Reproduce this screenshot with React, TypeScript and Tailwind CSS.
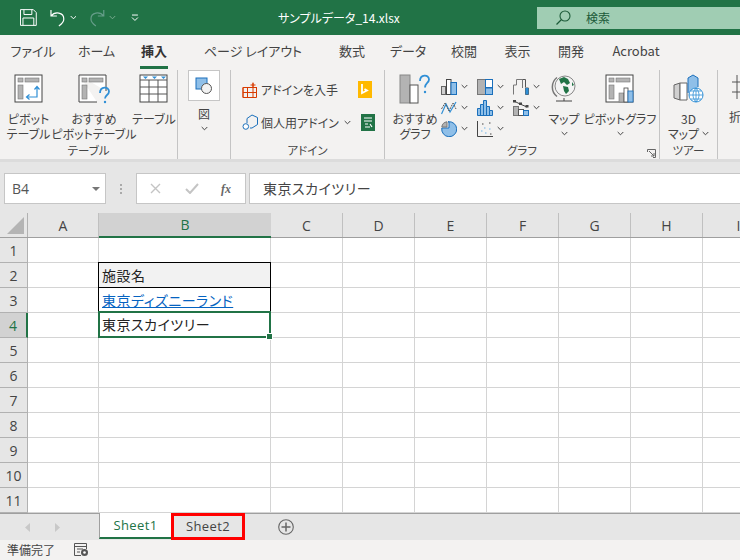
import { Fragment } from "react";

const jp = `font-['Noto_Sans_CJK_JP','Noto_Sans',sans-serif] [font-feature-settings:"palt"]`;

function Chev({ className = "" }: { className?: string }) {
  return (
    <svg width="7" height="5" viewBox="0 0 7 5" className={className}>
      <path d="M.7 1l2.8 2.8L6.3 1" fill="none" stroke="#444" strokeWidth="1" />
    </svg>
  );
}

function Frame({ children, w = 30, h = 30 }: { children: React.ReactNode; w?: number; h?: number }) {
  return (
    <svg width={w} height={h} viewBox={`0 0 ${w} ${h}`} className="block shrink-0">
      {children}
    </svg>
  );
}

const PivotBase = () => (
  <>
    <rect x="1" y="1" width="27" height="27" fill="#fff" stroke="#444" />
    <rect x="4" y="4" width="5" height="4" fill="#b3b3b3" stroke="#777" strokeWidth=".6" />
    <rect x="11" y="4" width="14" height="4" fill="#b3b3b3" stroke="#777" strokeWidth=".6" />
    <rect x="4" y="11" width="5" height="14" fill="#b3b3b3" stroke="#777" strokeWidth=".6" />
  </>
);

function PivotIcon() {
  return (
    <Frame>
      <PivotBase />
      <path d="M13 23h10v-10M20.5 15.5l2.5-3 2.5 3M15.5 20.5l-3 2.5 3 2.5" fill="none" stroke="#2f8fd6" strokeWidth="1.2" />
    </Frame>
  );
}

function PivotHelpIcon() {
  return (
    <Frame w={32}>
      <path d="M1 1h27v16M19 28H1V1" fill="#fff" stroke="#444" />
      <rect x="4" y="4" width="5" height="4" fill="#b3b3b3" stroke="#777" strokeWidth=".6" />
      <rect x="11" y="4" width="14" height="4" fill="#b3b3b3" stroke="#777" strokeWidth=".6" />
      <rect x="4" y="11" width="5" height="14" fill="#b3b3b3" stroke="#777" strokeWidth=".6" />
      <path d="M22 19c0-7 9-7 9-1.500 0 3.500-4 3.500-4 7" fill="none" stroke="#2f8fd6" strokeWidth="1.800" />
      <circle cx="27" cy="28" r="1.200" fill="#2f8fd6" />
    </Frame>
  );
}

function TableIcon() {
  return (
    <Frame>
      <rect x="1" y="1" width="27" height="27" fill="#fff" stroke="#444" />
      <path d="M1 6h27M1 13h27M1 20h27M10 6v22M19 6v22" stroke="#555" fill="none" />
      <path d="M4 2.500h5L6.500 5zM13 2.500h5L15.500 5zM22 2.500h5L24.500 5z" fill="#2f8fd6" />
    </Frame>
  );
}

function ShapesIcon() {
  return (
    <svg width="18" height="18" viewBox="0 0 18 18">
      <rect x="1" y="1" width="11" height="11" fill="#8fbfe8" stroke="#1a6fbb" />
      <circle cx="11.500" cy="11.500" r="5" fill="#f2f2f2" stroke="#555" />
    </svg>
  );
}

function StoreIcon() {
  return (
    <svg width="16" height="16" viewBox="0 0 16 16">
      <path d="M1 5.500h14M1 10.500h14M1 5.500v10h10v-15M5.500 5.500v10" fill="none" stroke="#d83b01" />
      <path d="M1 5.500v10h5M11 5.500h3.500v10H11M11 1v4.500M8.500 3h5" fill="none" stroke="#d83b01" />
    </svg>
  );
}

function AddinIcon() {
  return (
    <svg width="17" height="17" viewBox="0 0 17 17">
      <path d="M5 9V4.500L10 1l5.500 2.500v7L10 14H8" fill="none" stroke="#1a6fbb" />
      <circle cx="3.800" cy="12.500" r="2.800" fill="#fff" stroke="#1a6fbb" />
    </svg>
  );
}

function BingIcon() {
  return (
    <svg width="14" height="17" viewBox="0 0 14 17">
      <rect width="14" height="17" fill="#ffb900" />
      <path d="M4 3v9l5-2.500L6.500 8" fill="none" stroke="#fff" strokeWidth="1.800" />
    </svg>
  );
}

function PeopleIcon() {
  return (
    <svg width="14" height="17" viewBox="0 0 14 17">
      <rect width="14" height="17" fill="#217346" />
      <path d="M3 4h8M3 7h8M4 10h3M9 10l2 3M4 13h5" stroke="#fff" strokeWidth="1.200" fill="none" />
    </svg>
  );
}

function RecommendChartIcon() {
  return (
    <Frame w={32}>
      <rect x="1" y="1" width="10" height="28" fill="#b3b3b3" stroke="#888" />
      <rect x="11" y="11" width="8" height="18" fill="#fff" stroke="#555" />
      <path d="M21 7c0-7 9-7 9-1.500 0 3.500-4 3.500-4 8" fill="none" stroke="#2f8fd6" strokeWidth="1.800" />
      <circle cx="26" cy="18" r="1.200" fill="#2f8fd6" />
    </Frame>
  );
}

function MiniColumn() {
  return (
    <Frame w={16} h={16}>
      <rect x=".5" y="7.500" width="4" height="8" fill="#d0d0d0" stroke="#666" />
      <rect x="5.500" y=".5" width="4.500" height="15" fill="#fff" stroke="#444" />
      <rect x="10" y="3.500" width="5.500" height="12" fill="#8fbfe8" stroke="#1a6fbb" />
    </Frame>
  );
}

function MiniLine() {
  return (
    <Frame w={16} h={16}>
      <path d="M.5 14L5 4l4 8 6-10" fill="none" stroke="#2f8fd6" strokeWidth="1.200" />
      <path d="M.5 9L4 3l4 8 4-8 3 6" fill="none" stroke="#555" strokeWidth="1" strokeDasharray="2 1" />
    </Frame>
  );
}

function MiniPie() {
  return (
    <Frame w={16} h={16}>
      <path d="M7 .8A7.500 7.500 0 1 1 .8 7H8V.8z" fill="#8fbfe8" stroke="#1a6fbb" />
      <path d="M6 .8V6H.8A6 6 0 0 1 6 .8z" fill="#b3b3b3" stroke="#777" />
    </Frame>
  );
}

function MiniTree() {
  return (
    <Frame w={16} h={16}>
      <rect x=".5" y=".5" width="8" height="15" fill="#b3b3b3" stroke="#777" />
      <rect x="8.500" y=".5" width="7" height="8" fill="#fff" stroke="#1a6fbb" />
      <rect x="8.500" y="9" width="7" height="6.500" fill="#8fbfe8" stroke="#1a6fbb" />
    </Frame>
  );
}

function MiniHisto() {
  return (
    <Frame w={16} h={16}>
      <path d="M.5 15.500v-7h3v-4h3v-4h3v6h3v4h3v5z" fill="#8fbfe8" stroke="#1a6fbb" />
      <path d="M3.500 8.500v7M6.500 4.500v11M9.500 6.500v9M12.500 10.500v5" stroke="#1a6fbb" />
    </Frame>
  );
}

function MiniScatter() {
  return (
    <Frame w={16} h={16}>
      <path d="M.5 0v15.500H16" fill="none" stroke="#444" />
      <path d="M4 10h1.500M7 7h1.500M8 12h1.500M12 8h1.500" stroke="#6fb3e8" />
      <path d="M5 3h1.500M12 2h1.500M13 13h1.500" stroke="#444" />
    </Frame>
  );
}

function MiniWaterfall() {
  return (
    <Frame w={16} h={16}>
      <path d="M.5 15.500V6h3V.5h6V9" fill="none" stroke="#777" />
      <path d="M9.500 .5h3v8M12.500 9v6.500h3V9z" fill="none" stroke="#555" />
      <rect x="12.500" y="9" width="3" height="6.500" fill="#2f8fd6" />
    </Frame>
  );
}

function MiniStock() {
  return (
    <Frame w={16} h={16}>
      <rect x=".5" y="6.500" width="5" height="9" fill="#b3b3b3" stroke="#777" />
      <rect x="5.500" y="9.500" width="5" height="6" fill="#fff" stroke="#555" />
      <rect x="10.500" y="10.500" width="5" height="5" fill="#8fbfe8" stroke="#1a6fbb" />
      <path d="M1 1l6 3 7 3" stroke="#444" strokeWidth="1" fill="none" />
      <rect x="0" y="0" width="3" height="2.500" fill="#444" />
      <rect x="6" y="2.500" width="3" height="2.500" fill="#444" />
      <rect x="12.500" y="5" width="3" height="2.500" fill="#444" />
    </Frame>
  );
}

function GlobeIcon() {
  return (
    <Frame w={26} h={30}>
      <path d="M5 27h16M13 24v3" stroke="#444" fill="none" />
      <path d="M6 3.500a12 12 0 0 0 0 19" stroke="#777" strokeWidth="1.500" fill="none" />
      <circle cx="14" cy="12" r="10" fill="#f4f4f4" stroke="#888" />
      <path d="M8 5l5-2 4 2 2 4-3 2-3-3-3 2zM12 12l5 1 1 4-3 3-2-3zM21 8l2 3-2 1z" fill="#217346" />
    </Frame>
  );
}

function PivotChartIcon() {
  return (
    <Frame>
      <PivotBase />
      <rect x="14" y="19" width="5" height="9" fill="#b3b3b3" stroke="#777" strokeWidth=".6" />
      <rect x="19" y="14" width="4" height="14" fill="#fff" stroke="#444" strokeWidth=".8" />
      <rect x="23" y="17" width="5" height="11" fill="#8fbfe8" stroke="#1a6fbb" strokeWidth=".8" />
    </Frame>
  );
}

function Map3DIcon() {
  return (
    <Frame w={32}>
      <path d="M1 11l6-2v17l-6-2z" fill="#d0d0d0" stroke="#666" />
      <path d="M7 9h7v17H7z" fill="#fff" stroke="#666" />
      <path d="M15 19V4l5-3 5 3v9" fill="#8fbfe8" stroke="#1a6fbb" />
      <circle cx="23" cy="21" r="7" fill="#fff" stroke="#2f8fd6" />
      <path d="M16 21h14M23 14v14M18 17h10M18 25h10M23 14c-4 4-4 10 0 14M23 14c4 4 4 10 0 14" stroke="#2f8fd6" strokeWidth=".8" fill="none" />
    </Frame>
  );
}

function BigButton({ icon, lines, width, chevron }: { icon: React.ReactNode; lines: string[]; width: number; chevron?: boolean }) {
  return (
    <div className="flex flex-col items-center shrink-0" style={{ width }}>
      <div className="h-[32px] flex items-start justify-center">{icon}</div>
      <div className="mt-[5px] flex flex-col items-center text-[12px] leading-[15px] text-[#444] whitespace-nowrap">
        {lines.map((l) => (
          <span key={l}>{l}</span>
        ))}
        {chevron && <Chev className="mt-[5px]" />}
      </div>
    </div>
  );
}

function Group({ label, width, children, launcher }: { label: string; width: number; children: React.ReactNode; launcher?: boolean }) {
  return (
    <div className="relative flex flex-col shrink-0 h-[89px] border-r border-[#c4c4c4]" style={{ width }}>
      <div className="flex-1 flex min-h-0">{children}</div>
      <div className="h-[16px] text-center text-[11.500px] leading-[14px] text-[#444] whitespace-nowrap">{label}</div>
      {launcher && (
        <svg width="9" height="9" viewBox="0 0 9 9" className="absolute right-[3px] bottom-[1px]">
          <path d="M.5 3V.5H8.500V8.500H6M2 2l5 5M4 7h3V4" fill="none" stroke="#666" />
        </svg>
      )}
    </div>
  );
}

function MiniBtn({ icon }: { icon: React.ReactNode }) {
  return (
    <div className="flex items-center gap-[4px] h-[21px]">
      {icon}
      <Chev />
    </div>
  );
}

const tabs: [string, number, boolean?][] = [
  ["ファイル", 66],
  ["ホーム", 61],
  ["挿入", 54, true],
  ["ページ レイアウト", 144],
  ["数式", 54],
  ["データ", 58],
  ["校閲", 54],
  ["表示", 53],
  ["開発", 54],
  ["Acrobat", 76],
];

const cols = ["A", "B", "C", "D", "E", "F", "G", "H", "I"];
const colW: Record<string, number> = { A: 71, B: 172, C: 72, D: 72, E: 72, F: 72, G: 72, H: 72, I: 72 };
const rows = [1, 2, 3, 4, 5, 6, 7, 8, 9, 10, 11];

export default function App() {
  return (
    <div className={`w-[740px] h-[560px] overflow-hidden flex flex-col bg-[#f3f2f1] ${jp}`}>
      {/* title bar */}
      <div className="h-[35px] bg-[#217346] flex items-center shrink-0 relative text-white">
        <svg width="17" height="17" viewBox="0 0 17 17" className="ml-[20px]">
          <path d="M.5.5h13l3 3v13H.5zM4 .5v5h8v-5M3 16.500V9h11v7.500" fill="none" stroke="#fff" />
        </svg>
        <svg width="18" height="18" viewBox="0 0 18 18" className="ml-[12px]">
          <path d="M2 1v6h6M2 7c4-5 13-4 13 3 0 3-2 5-5 7" fill="none" stroke="#fff" strokeWidth="1.200" />
        </svg>
        <svg width="7" height="5" viewBox="0 0 7 5" className="ml-[3px]">
          <path d="M.7 1l2.800 2.800L6.300 1" fill="none" stroke="#fff" />
        </svg>
        <svg width="18" height="18" viewBox="0 0 18 18" className="ml-[12px] opacity-40">
          <path d="M16 1v6h-6M16 7C12 2 3 3 3 10c0 3 2 5 5 7" fill="none" stroke="#cde" strokeWidth="1.200" />
        </svg>
        <svg width="7" height="5" viewBox="0 0 7 5" className="ml-[3px] opacity-40">
          <path d="M.7 1l2.800 2.800L6.300 1" fill="none" stroke="#fff" />
        </svg>
        <svg width="8" height="8" viewBox="0 0 8 8" className="ml-[15px]">
          <path d="M1 1h6M1 3.500l3 3 3-3" fill="none" stroke="#fff" />
        </svg>
        <div className="ml-[139px] text-[12px] whitespace-nowrap flex items-center w-[115px]">
          サンプルデータ_14.xlsx
          <svg width="7" height="4" viewBox="0 0 7 4" className="ml-[6px]">
            <path d="M0 0h7L3.500 4z" fill="#fff" />
          </svg>
        </div>
        <div className="ml-[144px] w-[206px] h-[22px] bg-[#a0cdb3] flex items-center text-[#1c5a38]">
          <svg width="15" height="15" viewBox="0 0 15 15" className="ml-[19px]">
            <circle cx="9" cy="6" r="5" fill="none" stroke="#1c5a38" strokeWidth="1.100" />
            <path d="M5.500 9.500L.5 14.500" stroke="#1c5a38" strokeWidth="1.300" />
          </svg>
          <span className="ml-[15px] text-[12px]">検索</span>
        </div>
      </div>

      {/* tabs */}
      <div className="h-[34px] shrink-0 flex pl-[-1px] text-[13px] text-[#444]">
        {tabs.map(([t, w, active]) => (
          <div key={t} className="flex justify-center shrink-0 pt-[6px]" style={{ width: w }}>
            <span className={active ? "h-[28px] border-b-[3px] border-[#217346] font-bold px-[1px] text-[#333]" : ""}>{t}</span>
          </div>
        ))}
      </div>

      {/* ribbon */}
      <div className="h-[93px] shrink-0 flex overflow-hidden border-b-[3px] border-[#dcdcdc] pt-px">
        <Group label="テーブル" width={178}>
          <div className="flex pt-[4px]">
            <BigButton width={57} icon={<PivotIcon />} lines={["ピボット", "テーブル"]} />
            <BigButton width={74} icon={<PivotHelpIcon />} lines={["おすすめ", "ピボットテーブル"]} />
            <BigButton width={46} icon={<TableIcon />} lines={["テーブル"]} />
          </div>
        </Group>
        <Group label="" width={53}>
          <div className="w-full flex flex-col items-center">
            <div className="w-[32px] h-[31px] bg-white border border-[#c6c6c6] flex items-center justify-center">
              <ShapesIcon />
            </div>
            <span className="mt-[5px] text-[12px] leading-[15px] text-[#444]">図</span>
            <Chev className="mt-[5px]" />
          </div>
        </Group>
        <Group label="アドイン" width={154}>
          <div className="pl-[11px] pt-[11px] flex flex-col gap-[16px] w-full">
            <div className="flex items-center h-[17px] text-[12px] text-[#444] whitespace-nowrap">
              <StoreIcon />
              <span className="ml-[3px] w-[97px]">アドインを入手</span>
              <BingIcon />
            </div>
            <div className="flex items-center h-[17px] text-[12px] text-[#444] whitespace-nowrap">
              <AddinIcon />
              <span className="ml-[2px] w-[83px]">個人用アドイン</span>
              <Chev className="mr-[10px]" />
              <PeopleIcon />
            </div>
          </div>
        </Group>
        <Group label="グラフ" width={275} launcher>
          <div className="flex pt-[4px] pl-[9px]">
            <BigButton width={42} icon={<RecommendChartIcon />} lines={["おすすめ", "グラフ"]} />
            <div className="ml-[5px] grid grid-cols-[36px_36px_36px] content-start pt-[2px] h-[70px]">
              <MiniBtn icon={<MiniColumn />} />
              <MiniBtn icon={<MiniTree />} />
              <MiniBtn icon={<MiniWaterfall />} />
              <MiniBtn icon={<MiniLine />} />
              <MiniBtn icon={<MiniHisto />} />
              <MiniBtn icon={<MiniStock />} />
              <MiniBtn icon={<MiniPie />} />
              <MiniBtn icon={<MiniScatter />} />
            </div>
            <BigButton width={30} icon={<GlobeIcon />} lines={["マップ"]} chevron />
            <div className="ml-[6px]">
              <BigButton width={70} icon={<PivotChartIcon />} lines={["ピボットグラフ"]} chevron />
            </div>
          </div>
        </Group>
        <Group label="ツアー" width={58}>
          <div className="w-full pt-[4px]">
            <div className="flex flex-col items-center">
              <div className="h-[32px]">
                <Map3DIcon />
              </div>
              <div className="mt-[5px] text-[12px] leading-[15px] text-[#444] text-center whitespace-nowrap">
                <div>3D</div>
                <div className="flex items-center gap-[3px]">
                  マップ
                  <Chev />
                </div>
              </div>
            </div>
          </div>
        </Group>
        <div className="pl-[11px] pt-[4px] text-[12px] leading-[15px] text-[#444] shrink-0">
          <svg width="12" height="28" viewBox="0 0 12 28" className="ml-[3px] mb-[7px]">
            <path d="M0 8h12M5 1v24M0 18h12" stroke="#555" fill="none" />
          </svg>
          折
        </div>
      </div>

      {/* formula bar */}
      <div className="h-[51px] shrink-0 bg-[#e6e6e6] flex pt-[11px] pl-[4px]">
        <div className="h-[31px] w-[102px] bg-white border border-[#c6c6c6] flex items-center justify-between pl-[7px] pr-[5px] text-[14px] text-[#555] font-['Open_Sans',sans-serif]">
          B4
          <svg width="8" height="4" viewBox="0 0 8 4">
            <path d="M0 0h8L4 4z" fill="#777" />
          </svg>
        </div>
        <div className="w-[30px] h-[31px] flex flex-col items-center justify-center gap-[2px]">
          <span className="w-[2px] h-[2px] bg-[#aaa]" />
          <span className="w-[2px] h-[2px] bg-[#aaa]" />
          <span className="w-[2px] h-[2px] bg-[#aaa]" />
        </div>
        <div className="h-[31px] w-[110px] bg-white border border-[#c6c6c6] flex items-center text-[#bbb]">
          <svg width="11" height="11" viewBox="0 0 11 11" className="ml-[13px]">
            <path d="M1 1l9 9M10 1l-9 9" stroke="#c4c4c4" strokeWidth="1.400" />
          </svg>
          <svg width="14" height="11" viewBox="0 0 14 11" className="ml-[24px]">
            <path d="M1 6l4 4 8-9" fill="none" stroke="#c4c4c4" strokeWidth="2" />
          </svg>
          <span className="ml-[22px] text-[12px] italic font-bold text-[#666] font-['Liberation_Serif',serif]">fx</span>
        </div>
        <div className="ml-[3px] h-[31px] flex-1 bg-white border border-r-0 border-[#c6c6c6] flex items-center pl-[13px] text-[14px] text-[#444] tracking-[0.5px]">
          東京スカイツリー
        </div>
      </div>

      {/* sheet */}
      <div className="h-[300px] shrink-0 bg-white overflow-hidden">
        <div className="flex h-[25px] bg-[#e6e6e6] border-b border-[#9f9f9f] w-[800px] text-[14px] text-[#444] font-['Open_Sans',sans-serif]">
          <div className="w-[28px] shrink-0 border-r border-[#b1b1b1] flex items-end justify-end pr-[3px] pb-[3px]">
            <svg width="17" height="17" viewBox="0 0 17 17">
              <path d="M17 0v17H0z" fill="#b4b4b4" />
            </svg>
          </div>
          {cols.map((c) => (
            <div
              key={c}
              className={
                c === "B"
                  ? "shrink-0 flex items-center justify-center bg-[#d2d2d2] border-b-2 border-[#217346] text-[#217346] h-[25px]"
                  : "shrink-0 flex items-center justify-center border-r border-[#c0c0c0]"
              }
              style={{ width: colW[c] }}
            >
              {c}
            </div>
          ))}
        </div>
        {rows.map((r) => (
          <div key={r} className="flex h-[25px] w-[800px]">
            <div
              className={
                r === 4
                  ? "w-[28px] shrink-0 flex items-center justify-center bg-[#d2d2d2] border-r-2 border-[#217346] border-b border-b-[#b1b1b1] text-[#217346] text-[14px] font-['Open_Sans',sans-serif]"
                  : "w-[28px] shrink-0 flex items-center justify-center bg-[#e6e6e6] border-r border-b border-[#b1b1b1] text-[#444] text-[14px] font-['Open_Sans',sans-serif]"
              }
            >
              {r}
            </div>
            {cols.map((c) => (
              <Fragment key={c}>
                <Cell col={c} row={r} />
              </Fragment>
            ))}
          </div>
        ))}
      </div>

      {/* sheet tabs */}
      <div className="h-[27px] shrink-0 bg-[#e6e6e6] border-t border-[#9f9f9f] flex">
        <div className="w-[99px] shrink-0 flex items-center pl-[25px] gap-[23px]">
          <svg width="6" height="9" viewBox="0 0 6 9">
            <path d="M5 0v9L0 4.500z" fill="#c8c8c8" />
          </svg>
          <svg width="6" height="9" viewBox="0 0 6 9">
            <path d="M1 0v9l5-4.500z" fill="#c8c8c8" />
          </svg>
        </div>
        <div className="w-[72px] h-[26px] bg-white border-l border-[#9f9f9f] border-b-2 border-b-[#217346] -mt-px pt-px flex items-center justify-center text-[13px] text-[#217346] tracking-[0.4px] font-['Open_Sans',sans-serif]">
          Sheet1
        </div>
        <div className="w-[74px] h-[27px] -mt-px border-[3px] border-[#ff0000] flex items-center justify-center text-[13px] text-[#444] tracking-[0.4px] font-['Open_Sans',sans-serif]">
          Sheet2
        </div>
        <svg width="16" height="16" viewBox="0 0 16 16" className="ml-[33px] mt-[5px]">
          <circle cx="8" cy="8" r="7.300" fill="none" stroke="#666" strokeWidth="1.100" />
          <path d="M8 3.500v9M3.500 8h9" stroke="#666" strokeWidth="1.500" />
        </svg>
      </div>

      {/* status bar */}
      <div className="flex-1 bg-[#f3f2f1] flex items-center pl-[7px] text-[12px] text-[#444]">
        準備完了
        <svg width="15" height="14" viewBox="0 0 15 14" className="ml-[19px]">
          <path d="M7 12.500H.5V.5h12V6M.5 3.500h12M3 6h6M3 9h3" fill="none" stroke="#555" />
          <circle cx="10.500" cy="9.500" r="3.500" fill="#555" />
          <circle cx="10.500" cy="9.500" r="1.300" fill="#fff" />
        </svg>
      </div>
    </div>
  );
}

function Cell({ col, row }: { col: string; row: number }) {
  const w = colW[col];
  if (col === "B" && row === 2) {
    return (
      <div className="shrink-0 h-[26px] -mt-px -ml-px z-10 bg-[#f2f2f2] border border-black pl-[3px] text-[14px] leading-[25px] text-[#222] tracking-[0.5px]" style={{ width: w + 1 }}>
        施設名
      </div>
    );
  }
  if (col === "B" && row === 3) {
    return (
      <div className="shrink-0 h-[26px] -mt-px -ml-px z-10 border border-black pl-[3px] text-[14px] leading-[25px] text-[#0563c1] underline tracking-[0.5px] whitespace-nowrap" style={{ width: w + 1 }}>
        東京ディズニーランド
      </div>
    );
  }
  if (col === "B" && row === 4) {
    return (
      <div className="relative shrink-0 h-[27px] -mt-[2px] -ml-px z-20 border-2 border-[#217346] bg-white pl-[2px] text-[14px] leading-[23px] text-[#222] tracking-[0.5px]" style={{ width: w + 1 }}>
        東京スカイツリー
        <span className="absolute -right-[3px] -bottom-[3px] w-[5px] h-[5px] bg-[#217346] outline outline-1 outline-white" />
      </div>
    );
  }
  return <div className="shrink-0 border-r border-b border-[#d4d4d4]" style={{ width: w }} />;
}
